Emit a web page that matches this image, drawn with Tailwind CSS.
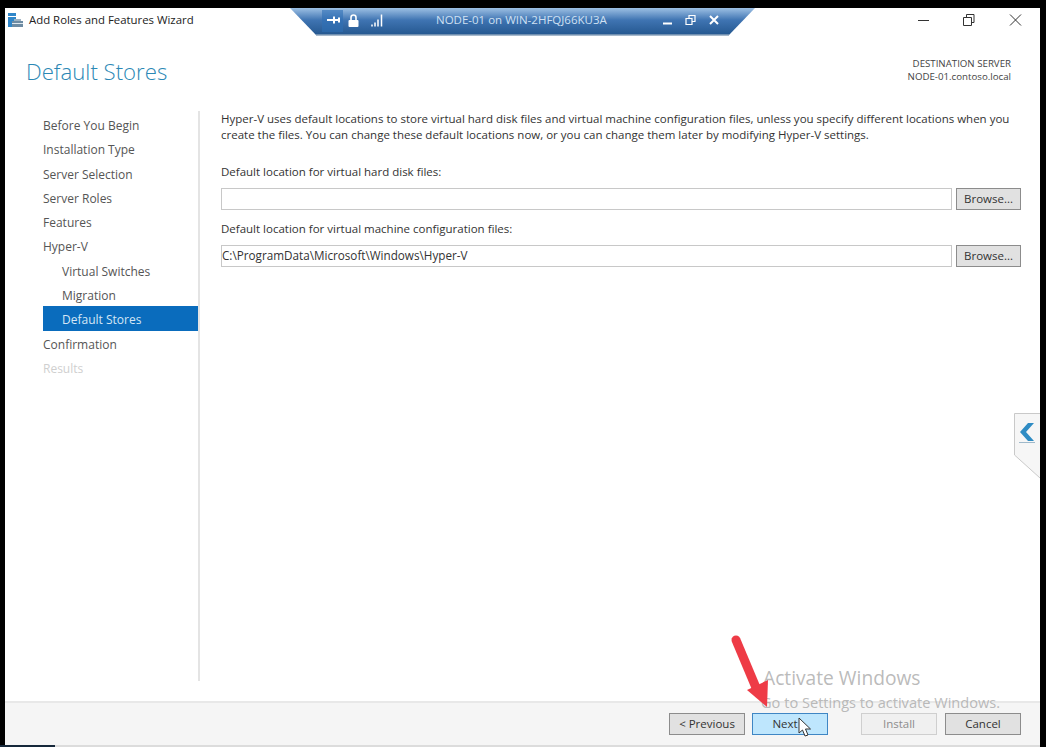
<!DOCTYPE html>
<html>
<head>
<meta charset="utf-8">
<script src="https://cdn.jsdelivr.net/npm/@tailwindcss/browser@4"></script>
</head>
<body class="w-[1046px] h-[747px] overflow-hidden bg-black font-['Open_Sans','Noto_Sans',sans-serif] text-[#333]">
<div class="relative ml-[5px] mt-[8px] w-[1035px] h-[737px] bg-white flex flex-col overflow-hidden">

  <!-- title bar -->
  <div class="h-[23px] flex items-center pl-[3px] shrink-0">
    <svg width="16" height="16" viewBox="0 0 16 16" class="mr-[5px] mt-[3px]">
      <rect x="0" y="0" width="8" height="3" fill="#2f86c9"/>
      <rect x="0" y="4" width="8" height="10" fill="#2f86c9"/>
      <rect x="4" y="8" width="11" height="6" fill="#6d8ba3"/>
      <rect x="6" y="6" width="7" height="2" fill="#9fb3c2"/>
      <rect x="4" y="10" width="11" height="1" fill="#dfe8ef"/>
    </svg>
    <span class="text-[11.4px] text-[#222]">Add Roles and Features Wizard</span>
  </div>

  <!-- heading -->
  <div class="h-[80px] shrink-0 flex justify-between pl-[21px] pr-[29px]">
    <h1 class="text-[22.2px] font-light text-[#2b88b5] mt-[23px] leading-[36px]">Default Stores</h1>
    <div class="text-right text-[9.7px] leading-[13px] text-[#444] mt-[26px]">
      <div>DESTINATION SERVER</div>
      <div>NODE-01.contoso.local</div>
    </div>
  </div>

  <!-- body -->
  <div class="flex h-[570px] shrink-0">
    <div class="w-[195px] shrink-0 border-r-2 border-[#e4e4e4] pl-[38px] pt-[1px] text-[12px] text-[#555]">
      <div class="h-[24.3px] leading-[27px]">Before You Begin</div>
      <div class="h-[24.3px] leading-[27px]">Installation Type</div>
      <div class="h-[24.3px] leading-[27px]">Server Selection</div>
      <div class="h-[24.3px] leading-[27px]">Server Roles</div>
      <div class="h-[24.3px] leading-[27px]">Features</div>
      <div class="h-[24.3px] leading-[27px]">Hyper-V</div>
      <div class="h-[24.3px] leading-[27px] pl-[19px]">Virtual Switches</div>
      <div class="h-[24.3px] leading-[27px] pl-[19px]">Migration</div>
      <div class="h-[24.3px] leading-[27px] pl-[19px] bg-[#0a6cbd] text-[#d5e6f5]">Default Stores</div>
      <div class="h-[24.3px] leading-[27px]">Confirmation</div>
      <div class="h-[24.3px] leading-[27px] text-[#cfcfcf]">Results</div>
    </div>
    <div class="flex-1 pl-[21px] pr-[19px] text-[11.5px] text-[#333]">
      <p class="leading-[16px]">Hyper-V uses default locations to store virtual hard disk files and virtual machine configuration files, unless you specify different locations when you create the files. You can change these default locations now, or you can change them later by modifying Hyper-V settings.</p>
      <div class="mt-[21px] leading-[16px]">Default location for virtual hard disk files:</div>
      <div class="flex gap-[4px] mt-[8px]">
        <div class="flex-1 h-[22px] border border-[#c8c8c8]"></div>
        <div class="w-[65px] h-[22px] border border-[#8c8c8c] bg-[#e1e1e1] flex items-center justify-center">Browse...</div>
      </div>
      <div class="mt-[11px] leading-[16px]">Default location for virtual machine configuration files:</div>
      <div class="flex gap-[4px] mt-[8px]">
        <div class="flex-1 h-[22px] border border-[#c8c8c8] flex items-center text-[11.7px]">C:\ProgramData\Microsoft\Windows\Hyper-V</div>
        <div class="w-[65px] h-[22px] border border-[#8c8c8c] bg-[#e1e1e1] flex items-center justify-center">Browse...</div>
      </div>
    </div>
  </div>

  <!-- footer -->
  <div class="mt-[20px] flex-1 bg-[#f5f5f5] border-t-2 border-[#e8e8e8] flex items-start justify-end pr-[19px] pt-[10px] text-[11.5px]">
    <div class="w-[76px] h-[22px] border border-[#8c8c8c] bg-[#e1e1e1] flex items-center justify-center">&lt; Previous</div>
    <div class="ml-[7px] w-[76px] h-[22px] border border-[#3f86c4] bg-[#bee6fd] flex items-center justify-center pr-[10px]">Next</div>
    <div class="ml-[33px] w-[76px] h-[22px] border border-[#cfcfcf] bg-[#f0f0f0] text-[#8d8d8d] flex items-center justify-center">Install</div>
    <div class="ml-[8px] w-[76px] h-[22px] border border-[#8c8c8c] bg-[#e1e1e1] flex items-center justify-center">Cancel</div>
  </div>

  <!-- window buttons -->
  <svg class="absolute left-[912px] top-[5px]" width="110" height="14" viewBox="0 0 110 14" fill="none" stroke="#333" stroke-width="1">
    <path d="M1 7.500h11"/>
    <path d="M46.500 4.500h8v8h-8z M49.500 4.500v-3h7.500v8h-2.500"/>
    <path d="M93 1.500l11 11 M104 1.500l-11 11"/>
  </svg>

  <!-- remote session bar -->
  <svg class="absolute left-[285px] top-0" width="470" height="28" viewBox="0 0 470 28">
    <defs>
      <linearGradient id="barFill" x1="0" y1="0" x2="0" y2="1">
        <stop offset="0" stop-color="#9dc0e4"/>
        <stop offset="0.45" stop-color="#3f74b2"/>
        <stop offset="1" stop-color="#24578f"/>
      </linearGradient>
    </defs>
    <path d="M0 0H465L439 27H26z" fill="url(#barFill)"/>
    <path d="M26 27H439" stroke="#8aa2bb" stroke-width="1.500"/>
    <rect x="32" y="2" width="21" height="22" fill="#2f6fb5" fill-opacity="0.6"/>
    <path d="M37 12h13 M44 8.500v7 M49 9.500v5" stroke="#fff" stroke-width="2" fill="none"/>
    <rect x="58.500" y="12" width="10" height="7" rx="1" fill="#fff"/>
    <path d="M61 12V9.500a2.500 2.500 0 0 1 5 0V12" stroke="#fff" stroke-width="1.600" fill="none"/>
    <path d="M82 18.500v-2 M85 18.500v-4 M88 18.500v-7 M91.500 18.500v-12" stroke="#fff" stroke-width="1.500"/>
    <path d="M373 15.500h9" stroke="#fff" stroke-width="2"/>
    <path d="M396 10.500h6v6h-6z M399 10.500V7.500h6v6h-3" stroke="#fff" stroke-width="1.200" fill="none"/>
    <path d="M420 8l8 8 M428 8l-8 8" stroke="#fff" stroke-width="2"/>
  </svg>
  <div class="absolute left-[431px] top-[4px] text-[11.5px] leading-[16px] text-[#cfe0f2]">NODE-01 on WIN-2HFQJ66KU3A</div>

  <!-- side tab -->
  <svg class="absolute left-[1009px] top-[405px]" width="26" height="70" viewBox="0 0 26 70">
    <path d="M26 .5H.5V42L26 65" fill="#f6f6f6" stroke="#c9c9c9"/>
    <path d="M14 10l-8 9 8 9h6l-8-9 8-9z" fill="#2f8cc4"/>
    <path d="M5 29.500h16" stroke="#9fb9ca" stroke-width="1"/>
  </svg>

  <!-- activation watermark -->
  <div class="absolute left-[758px] top-[658px] text-[19.2px] leading-[24px] text-[#a9a9a9]/80">Activate Windows</div>
  <div class="absolute left-[756px] top-[685px] text-[14.6px] leading-[18px] text-[#a9a9a9]/80">Go to Settings to activate Windows.</div>

  <!-- red arrow -->
  <svg class="absolute left-[715px] top-[622px]" width="60" height="90" viewBox="0 0 60 90" fill="none">
    <path d="M16 10L37 60" stroke="#ee3b46" stroke-width="9" stroke-linecap="round"/>
    <path d="M27 60L48 50L47 77z" fill="#ee3b46"/>
  </svg>

  <!-- mouse cursor -->
  <svg class="absolute left-[793px] top-[709px]" width="14" height="22" viewBox="0 0 14 22">
    <path d="M1 1V16L4.500 13L7 19L10 18L7.500 12H12.500z" fill="#fff" stroke="#333" stroke-width="1"/>
  </svg>
</div>
<div class="absolute left-0 top-[745px] w-[55px] h-[2px] bg-[#16283a]"></div>
<div class="absolute left-[55px] top-[745px] w-[985px] h-[2px] bg-[#dcdcdc]"></div>
</body>
</html>
